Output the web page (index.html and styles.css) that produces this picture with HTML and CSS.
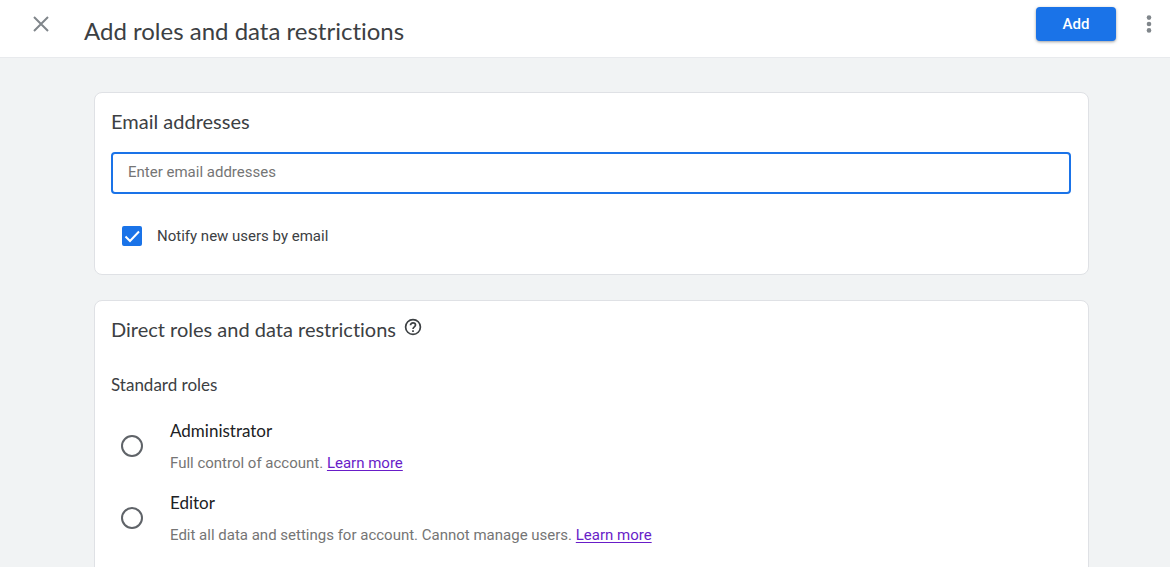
FILE: index.html
```html
<!DOCTYPE html>
<html lang="en">
<head>
<meta charset="utf-8">
<meta name="viewport" content="width=device-width, initial-scale=1">
<title>Add roles and data restrictions</title>
<link rel="stylesheet" href="styles.css">
</head>
<body>
<header class="topbar">
  <button class="icon-button close-button" type="button" aria-label="Close">
    <svg width="16" height="16" viewBox="0 0 16 16" fill="none" stroke="currentColor" stroke-width="2"><path d="M1 1 15 15M15 1 1 15"/></svg>
  </button>
  <h1 class="page-title">Add roles and data restrictions</h1>
  <button class="add-button" type="button">Add</button>
  <button class="icon-button menu-button" type="button" aria-label="More options">
    <svg width="6" height="18" viewBox="0 0 6 18" fill="currentColor"><circle cx="3" cy="2.6" r="2.3"/><circle cx="3" cy="9" r="2.3"/><circle cx="3" cy="15.4" r="2.3"/></svg>
  </button>
</header>
<main class="content">
  <section class="card">
    <h2 class="card-title"><label for="emails">Email addresses</label></h2>
    <input class="email-input" id="emails" type="text" placeholder="Enter email addresses">
    <div class="notify">
      <input class="checkbox" id="notify" type="checkbox" checked>
      <svg class="checkmark" width="20" height="20" viewBox="0 0 20 20" fill="none" stroke="#fff" stroke-width="2"><path d="M3.5 10.5 8 15 17 5.5"/></svg>
      <label for="notify">Notify new users by email</label>
    </div>
  </section>
  <section class="card roles-card">
    <div class="title-row">
      <h2 class="card-title">Direct roles and data restrictions</h2>
      <button class="icon-button" type="button" aria-label="Help">
        <svg width="18" height="18" viewBox="0 0 18 18" fill="none" stroke="currentColor" stroke-width="1.7"><circle cx="9" cy="9" r="7.4"/><path d="M6.5 7.3C6.5 5.8 7.5 4.8 9 4.8s2.5 1 2.5 2.3C11.5 8.8 9 9 9 11.1M9 12.2v1.7"/></svg>
      </button>
    </div>
    <h3 class="group-title">Standard roles</h3>
    <div class="role">
      <input class="radio" type="radio" name="role" id="admin" aria-describedby="admin-note">
      <div class="role-text">
        <label class="role-name" for="admin">Administrator</label>
        <p class="role-note" id="admin-note">Full control of account. <a href="#admin">Learn more</a></p>
      </div>
    </div>
    <div class="role">
      <input class="radio" type="radio" name="role" id="editor" aria-describedby="editor-note">
      <div class="role-text">
        <label class="role-name" for="editor">Editor</label>
        <p class="role-note" id="editor-note">Edit all data and settings for account. Cannot manage users. <a href="#editor">Learn more</a></p>
      </div>
    </div>
  </section>
</main>
</body>
</html>
```
FILE: styles.css
```css
* {
  box-sizing: border-box;
}

body {
  display: flex;
  flex-direction: column;
  height: 100vh;
  margin: 0;
  background: #f1f3f4;
  color: #3c4043;
  font: 15px/20px Roboto, sans-serif;
  font-variant-ligatures: none;
}

h1, h2, h3, p {
  margin: 0;
  font-weight: 400;
}

.topbar {
  display: flex;
  flex: none;
  align-items: flex-start;
  padding: 7px 18px 10px 33px;
  border-bottom: 1px solid #e8eaed;
  background: #fff;
}

.icon-button {
  display: flex;
  padding: 0;
  border: 0;
  background: none;
  color: #3c4043;
}

.topbar .icon-button {
  height: 34px;
  align-items: center;
  color: #80868b;
}

.page-title {
  flex: 1;
  padding: 8px 0 0 35px;
  font-family: Lato, sans-serif;
  font-size: 24px;
  line-height: 32px;
}

.add-button {
  width: 80px;
  height: 34px;
  margin-right: 30px;
  border: 0;
  border-radius: 4px;
  background: #1a73e8;
  box-shadow: 0 1px 3px rgba(60, 64, 67, 0.5);
  color: #fff;
  font: 500 15px/20px Roboto, sans-serif;
}

.content {
  display: flex;
  flex: 1;
  flex-direction: column;
  gap: 25px;
  min-height: 0;
  padding: 34px 81px 0 94px;
  overflow-y: auto;
  scrollbar-width: none;
}

.card {
  flex: none;
  padding: 15px 17px 16px 16px;
  border: 1px solid #dfe1e5;
  border-radius: 8px;
  background: #fff;
}

.roles-card {
  padding-bottom: 32px;
}

.card-title {
  font-family: Lato, sans-serif;
  font-size: 20px;
  line-height: 26px;
}

.email-input {
  display: block;
  width: 100%;
  height: 42px;
  margin-top: 18px;
  padding: 0 15px 2px;
  border: 2px solid #1a73e8;
  border-radius: 4px;
  outline: 0;
  background: #fff;
  color: #3c4043;
  font: 15px/20px Roboto, sans-serif;
}

.email-input::placeholder {
  color: #757575;
  opacity: 1;
}

.notify {
  display: grid;
  grid-template-columns: 20px 1fr;
  column-gap: 15px;
  align-items: center;
  padding: 32px 0 12px 11px;
}

.checkbox,
.checkmark {
  grid-area: 1 / 1;
}

.checkbox {
  width: 20px;
  height: 20px;
  margin: 0;
  border: 2px solid #5f6368;
  border-radius: 2px;
  appearance: none;
}

.checkbox:checked {
  border-color: #1a73e8;
  background: #1a73e8;
}

.checkmark {
  z-index: 1;
  pointer-events: none;
}

.title-row {
  display: flex;
  gap: 8px;
}

.title-row .icon-button {
  align-items: flex-start;
  padding-top: 2px;
}

.group-title {
  margin: 31px 0 13px;
  font-family: Lato, sans-serif;
  font-size: 17px;
  line-height: 24px;
}

.role {
  display: flex;
  align-items: center;
  gap: 27px;
  height: 72px;
  padding-left: 10px;
}

.radio {
  flex: none;
  width: 22px;
  height: 22px;
  margin: 0;
  border: 2px solid #5f6368;
  border-radius: 50%;
  appearance: none;
}

.radio:checked {
  background: radial-gradient(#1a73e8 45%, #fff 50%);
}

.role-name {
  display: block;
  color: #202124;
  font-family: Lato, sans-serif;
  font-size: 17px;
  line-height: 24px;
}

.role-note {
  margin-top: 10px;
  color: #757575;
}

.role-note a {
  color: #681dc8;
  text-underline-offset: 2px;
}
```
